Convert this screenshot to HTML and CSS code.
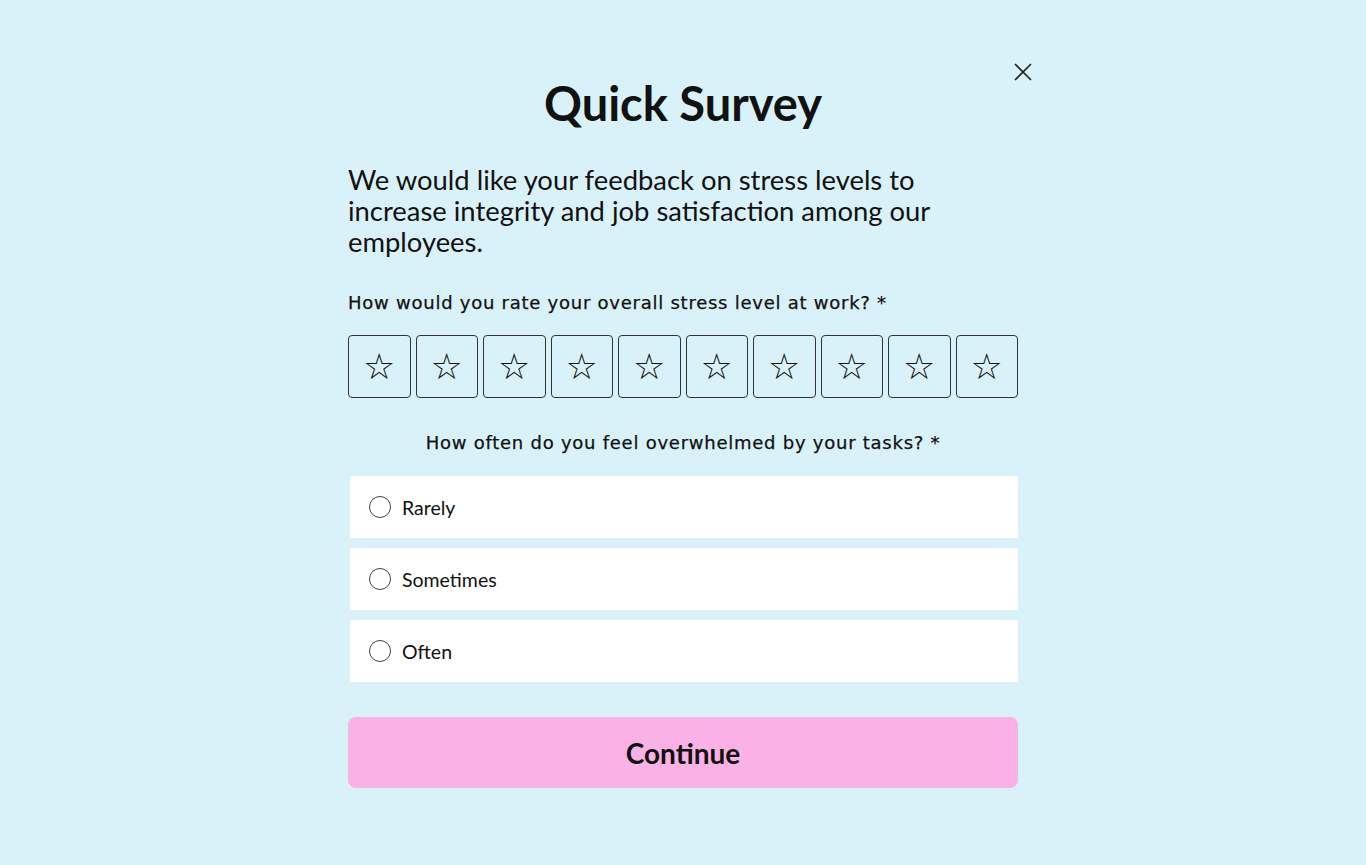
FILE: index.html
```html
<!DOCTYPE html>
<html>
<head>
    <title>Quick Survey</title>
    <meta charset="UTF-8">
    <link rel="stylesheet" href="styles.css">
</head>
<body>
    <div class="survey">
        <button class="close-button" aria-label="Close">
            <svg width="20" height="20" viewBox="0 0 20 20"><path d="M2 2 L18 18 M18 2 L2 18" stroke="#222" stroke-width="1.6" fill="none"/></svg>
        </button>

        <h1>Quick Survey</h1>

        <p class="intro">We would like your feedback on stress levels to increase integrity and job satisfaction among our employees.</p>

        <div class="question">How would you rate your overall stress level at work? *</div>
        <div class="stars">
            <button class="star">☆</button>
            <button class="star">☆</button>
            <button class="star">☆</button>
            <button class="star">☆</button>
            <button class="star">☆</button>
            <button class="star">☆</button>
            <button class="star">☆</button>
            <button class="star">☆</button>
            <button class="star">☆</button>
            <button class="star">☆</button>
        </div>

        <div class="question centered">How often do you feel overwhelmed by your tasks? *</div>
        <div class="options">
            <label class="option"><span class="radio"></span>Rarely</label>
            <label class="option"><span class="radio"></span>Sometimes</label>
            <label class="option"><span class="radio"></span>Often</label>
        </div>

        <button class="continue-button">Continue</button>
    </div>
</body>
</html>
```

FILE: styles.css
```css
body {
    margin: 0;
    background: #d9f2fa;
    font-family: Lato, "Open Sans", sans-serif;
    color: #111;
}
.survey {
    position: relative;
    width: 670px;
    margin: 0 auto;
    padding-top: 72px;
}
.close-button {
    position: absolute;
    top: 62px;
    right: -15px;
    background: none;
    border: none;
    padding: 0;
    cursor: pointer;
}
h1 {
    margin: 0;
    text-align: center;
    font-size: 47px;
    font-weight: 700;
    line-height: 62px;
}
.intro {
    margin: 30px 0 0;
    font-size: 27.4px;
    line-height: 31px;
}
.question {
    margin-top: 34px;
    font-family: "DejaVu Sans", sans-serif;
    font-size: 18px;
    letter-spacing: 0.75px;
    -webkit-text-stroke: 0.25px #111;
    line-height: 24px;
}
.question.centered {
    text-align: center;
    margin-top: 33px;
}
.stars {
    display: flex;
    gap: 5px;
    margin-top: 20px;
}
.star {
    flex: 1;
    height: 63px;
    border: 1px solid #333;
    border-radius: 4px;
    background: transparent;
    font-size: 36px;
    line-height: 1;
    padding: 0;
    color: #111;
    font-family: "DejaVu Sans", sans-serif;
}
.options {
    display: flex;
    flex-direction: column;
    gap: 10px;
    margin-top: 21px;
    padding-left: 2px;
}
.option {
    display: flex;
    align-items: center;
    height: 62px;
    background: #fff;
    padding-left: 19px;
    font-size: 19.5px;
}
.radio {
    width: 20px;
    height: 20px;
    border: 1px solid #444;
    border-radius: 50%;
    margin-right: 11px;
}
.continue-button {
    display: block;
    width: 100%;
    height: 71px;
    margin-top: 35px;
    border: none;
    border-radius: 8px;
    background: #f9b1e6;
    font-family: Lato, sans-serif;
    font-weight: 700;
    font-size: 28px;
    color: #111;
    cursor: pointer;
}
```
